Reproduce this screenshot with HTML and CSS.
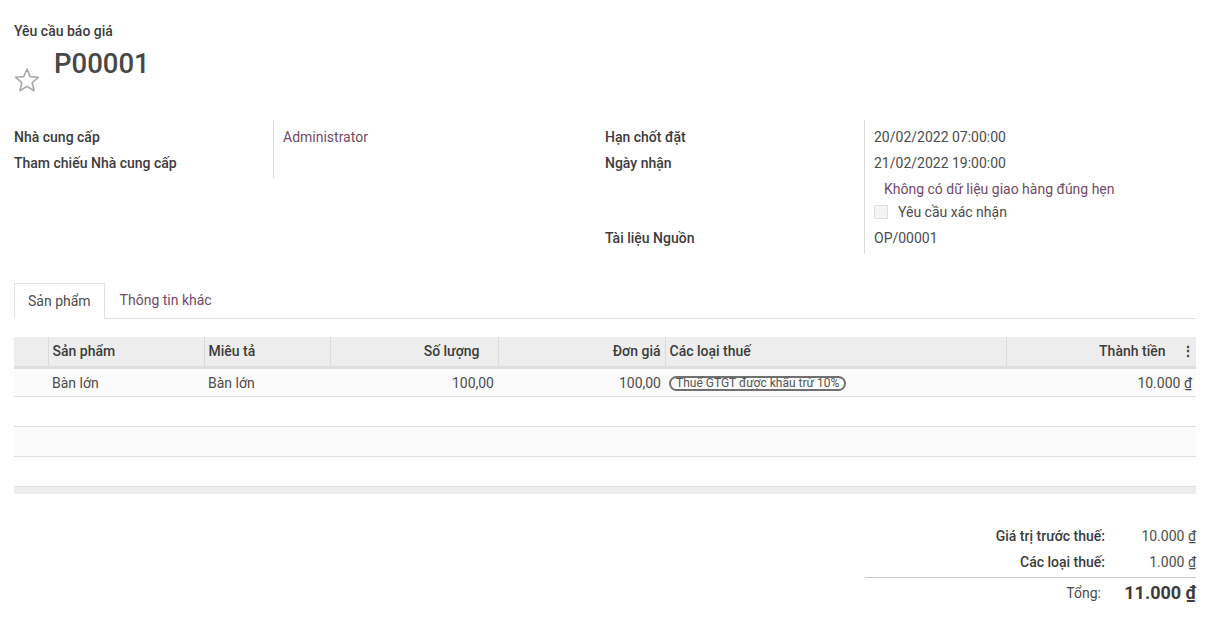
FILE: index.html
```html
<!DOCTYPE html>
<html lang="vi">
<head>
<meta charset="utf-8">
<link rel="stylesheet" href="styles.css">
</head>
<body>
<div class="sheet">
  <div class="title-area">
    <div class="subtitle">Yêu cầu báo giá</div>
    <div class="name-row">
      <svg class="star" width="26" height="26" viewBox="0 0 26 26"><polygon points="13,2 16.2,9.6 24.4,10.3 18.2,15.7 20.1,23.7 13,19.4 5.9,23.7 7.8,15.7 1.6,10.3 9.8,9.6" fill="none" stroke="#a8a8a8" stroke-width="1.6" stroke-linejoin="round"/></svg>
      <h1 class="name">P00001</h1>
    </div>
  </div>

  <div class="groups">
    <div class="group">
      <div class="lbl">Nhà cung cấp</div><div class="val"><span class="link">Administrator</span></div>
      <div class="lbl">Tham chiếu Nhà cung cấp</div><div class="val"></div>
    </div>
    <div class="group">
      <div class="lbl">Hạn chốt đặt</div><div class="val">20/02/2022 07:00:00</div>
      <div class="lbl">Ngày nhận</div><div class="val">21/02/2022 19:00:00</div>
      <div class="lbl"></div><div class="val"><span class="link indent">Không có dữ liệu giao hàng đúng hẹn</span></div>
      <div class="lbl short"></div><div class="val short"><span class="check"></span>Yêu cầu xác nhận</div>
      <div class="lbl last"></div><div class="val last"></div>
      <div class="lbl">Tài liệu Nguồn</div><div class="val">OP/00001</div>
    </div>
  </div>

  <div class="tabs">
    <div class="tab active">Sản phẩm</div>
    <div class="tab other">Thông tin khác</div>
  </div>

  <table class="lines">
    <thead>
      <tr>
        <th class="c-handle"></th>
        <th class="c-prod">Sản phẩm</th>
        <th class="c-desc">Miêu tả</th>
        <th class="c-qty num">Số lượng</th>
        <th class="c-price num">Đơn giá</th>
        <th class="c-tax">Các loại thuế</th>
        <th class="c-sub num">Thành tiền <span class="dots">⋮</span></th>
      </tr>
    </thead>
    <tbody>
      <tr class="odd first">
        <td></td><td>Bàn lớn</td><td>Bàn lớn</td><td class="num">100,00</td><td class="num">100,00</td>
        <td><span class="badge">Thuế GTGT được khấu trừ 10%</span></td>
        <td class="num pr">10.000 <u>₫</u></td>
      </tr>
      <tr><td colspan="7"></td></tr>
      <tr class="odd"><td colspan="7"></td></tr>
      <tr><td colspan="7"></td></tr>
    </tbody>
    <tfoot><tr><td colspan="7"></td></tr></tfoot>
  </table>

  <div class="totals">
    <div class="t-lbl">Giá trị trước thuế:</div><div class="t-val">10.000 <u>₫</u></div>
    <div class="t-lbl">Các loại thuế:</div><div class="t-val">1.000 <u>₫</u></div>
    <div class="t-sep"></div>
    <div class="t-lbl normal">Tổng:</div><div class="t-val big">11.000 <u>₫</u></div>
  </div>
</div>
</body>
</html>
```
FILE: styles.css
```css
* { box-sizing: border-box; }
html, body { margin: 0; background: #fff; }
body {
  font-family: Roboto, "Noto Sans", sans-serif;
  font-size: 14px;
  color: #4c4c4c;
  line-height: 20px;
}
.sheet { padding: 20px 14px 0 14px; }
.subtitle { font-weight: 500; color: #3c3c3c; line-height: 22px; }
.name-row { display: flex; align-items: flex-start; gap: 14px; height: 72px; }
.star { margin-top: 25px; flex: none; }
.name { margin: 4px 0 0 0; font-size: 27.5px; font-weight: 500; color: #484848; line-height: 36px; }

.groups { display: flex; margin-top: 6px; }
.group {
  width: 591px;
  display: grid;
  grid-template-columns: 260px 1fr;
  align-content: start;
}
.lbl {
  font-weight: 500;
  color: #3c3c3c;
  border-right: 1px solid #dcdcdc;
  padding: 3px 0;
  min-height: 26px;
}
.val { padding: 3px 0 3px 9px; min-height: 26px; }
.lbl.short { min-height: 20px; padding: 0; }
.val.short { min-height: 20px; padding: 0 0 0 9px; }
.lbl.last, .val.last { min-height: 3px; padding: 0; }
.group .lbl:first-child, .group .lbl:first-child + .val { padding-top: 7px; min-height: 30px; }
.link { color: #714b67; }
.link.indent { margin-left: 10px; }
.val.short { display: flex; align-items: center; }
.check {
  display: inline-block; width: 14px; height: 14px;
  border: 1px solid #dcdcdc; background: #f4f4f4;
  margin-right: 10px; border-radius: 1px;
}
.group:first-child .lbl:nth-child(3), .group:first-child .val:nth-child(4) { padding-bottom: 6px; }
.group:last-child .lbl:nth-last-child(2), .group:last-child .val:last-child { padding-bottom: 6px; }

.tabs {
  display: flex;
  margin-top: 29px;
  border-bottom: 1px solid #dee2e6;
  height: 36px;
}
.tab {
  padding: 7px 13px 0 13px;
  color: #714b67;
  height: 36px;
}
.tab.other { padding-left: 15px; }
.tab.active {
  color: #4c4c4c;
  border: 1px solid #dee2e6;
  border-bottom: none;
  background: #fff;
  height: 36px;
  margin-bottom: -1px;
}

.lines {
  margin-top: 18px;
  width: 100%;
  border-collapse: collapse;
  table-layout: fixed;
}
.lines th {
  background: #ededed;
  font-weight: 500;
  color: #3c3c3c;
  text-align: left;
  height: 30px;
  padding: 0 4px;
  border-left: 1px solid #dadada;
  border-bottom: 3px solid #dedede;
  white-space: nowrap;
}
.lines th:first-child { border-left: none; }
.c-handle { width: 34px; }
.c-prod { width: 156px; }
.c-desc { width: 126px; }
.c-qty { width: 168px; }
.c-price { width: 167px; }
.c-tax { width: 341px; }
.lines th.num { text-align: right; padding-right: 18px; }
.lines th.c-price { padding-right: 4px; }
.lines th.c-sub { padding-right: 1px; }
.dots { font-weight: 700; margin-left: 12px; color: #444; }
.lines td {
  height: 30px;
  padding: 0 4px;
  border-bottom: 1px solid #dedede;
  white-space: nowrap;
}
.lines tbody tr.first td { height: 29px; padding-top: 1px; }
.lines tr.odd td { background: #fbfbfb; }
.lines td.num { text-align: right; }
.lines td.pr { padding-right: 4px; }
.lines tfoot td { height: 8px; background: #ededed; border-bottom: none; padding: 0; }
.badge {
  display: inline-block;
  border: 2px solid #707070;
  border-radius: 9px;
  font-size: 12px;
  line-height: 11px;
  padding: 0 5px;
  color: #555;
  vertical-align: middle;
}

.totals {
  margin: 29px 0 0 auto;
  width: 331px;
  display: grid;
  grid-template-columns: 1fr 91px;
  align-items: center;
}
.t-lbl { text-align: right; font-weight: 500; color: #3c3c3c; padding-right: 0; height: 26px; line-height: 26px; }
.t-val { text-align: right; height: 26px; line-height: 26px; }
.t-sep { grid-column: 1 / 3; border-top: 1px solid #c8c8c8; margin: 2px 0 0 0; }
.t-lbl.normal { font-weight: 400; color: #4c4c4c; height: 30px; line-height: 30px; padding-right: 4px; }
.t-val.big { font-size: 18px; font-weight: 700; color: #3c3c3c; height: 30px; line-height: 30px; }
```
